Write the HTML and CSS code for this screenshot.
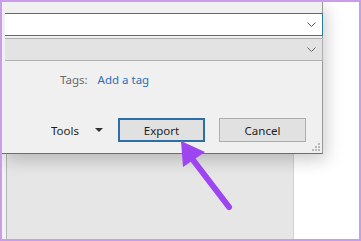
FILE: index.html
```html
<!DOCTYPE html>
<html lang="en">
<head>
    <meta charset="UTF-8">
    <meta name="viewport" content="width=device-width, initial-scale=1.0">
    <title>Export dialog</title>
    <link rel="stylesheet" href="styles.css">
</head>
<body>
    <div class="frame">
        <div class="backdrop">
            <div class="side-strip"></div>
            <div class="panel"></div>
            <div class="blank"></div>
        </div>

        <div class="dialog">
            <div class="combo combo-focus">
                <svg class="chevron" width="9" height="5" viewBox="0 0 9 5"><path d="M0.5 0.5 L4.5 4.5 L8.5 0.5" fill="none" stroke="#555" stroke-width="1"/></svg>
            </div>
            <div class="combo combo-disabled">
                <svg class="chevron" width="9" height="5" viewBox="0 0 9 5"><path d="M0.5 0.5 L4.5 4.5 L8.5 0.5" fill="none" stroke="#666" stroke-width="1"/></svg>
            </div>

            <div class="tags-row">
                <span class="tags-label">Tags:</span>
                <a class="tags-link" href="#">Add a tag</a>
            </div>

            <div class="button-row">
                <span class="tools">Tools</span>
                <span class="caret"></span>
                <button class="btn btn-default">Export</button>
                <button class="btn">Cancel</button>
            </div>

            <div class="grip">
                <span></span><span></span><span></span>
                <span></span><span></span><span></span>
            </div>
        </div>

        <!-- annotation arrow -->
        <svg class="arrow" width="361" height="241" viewBox="0 0 361 241">
            <line x1="190" y1="156" x2="229" y2="207" stroke="#9e45f2" stroke-width="6" stroke-linecap="round"/>
            <polygon points="181,141 183,167 205,152" fill="#9e45f2"/>
        </svg>
    </div>
</body>
</html>
```

FILE: styles.css
```css
body {
    margin: 0;
    padding: 0;
    font-family: 'Noto Sans', 'Liberation Sans', sans-serif;
    font-size: 11.5px;
    color: #1e1e1e;
}
.frame {
    width: 361px;
    height: 241px;
    box-sizing: border-box;
    border: 2px solid #c99cec;
    background-color: #ffffff;
    position: relative;
    overflow: hidden;
}
.backdrop {
    display: flex;
    height: 100%;
}
.side-strip {
    width: 4px;
    background-color: #f2f2f2;
    border-right: 1px solid #b4b4b4;
}
.panel {
    width: 286px;
    background-color: #e6e6e6;
    border-right: 1px solid #d2d2d2;
}
.blank {
    flex: 1;
    background-color: #ffffff;
}
.dialog {
    position: absolute;
    top: 0;
    left: 0;
    width: 320px;
    height: 140px;
    background-color: #f0f0f0;
    border-right: 1px solid #9a9a9a;
    border-bottom: 1px solid #6e6e6e;
    box-shadow: 3px 6px 16px rgba(0, 0, 0, 0.2);
    padding-top: 11px;
}
.combo {
    height: 21px;
    margin-left: 3px;
    width: 311px;
    display: flex;
    align-items: center;
    justify-content: flex-end;
    padding-right: 6px;
}
.combo-focus {
    background-color: #ffffff;
    border: 1px solid #2a7c9c;
    border-left: none;
}
.combo-disabled {
    margin-top: 2px;
    background-color: #e3e3e3;
    border: 1px solid #b0b0b0;
    border-left: none;
}
.chevron {
    display: block;
}
.tags-row {
    display: flex;
    align-items: center;
    margin-top: 9px;
    padding-left: 58px;
    height: 18px;
}
.tags-label {
    color: #6a6a6a;
    margin-right: 10px;
}
.tags-link {
    color: #2f6db8;
    text-decoration: none;
}
.button-row {
    display: flex;
    align-items: center;
    margin-top: 30px;
    padding-left: 49px;
    height: 24px;
}
.tools {
    color: #1e1e1e;
}
.caret {
    width: 0;
    height: 0;
    border-left: 4px solid transparent;
    border-right: 4px solid transparent;
    border-top: 4px solid #333;
    margin-left: 16px;
    margin-right: 15px;
}
.btn {
    font-family: inherit;
    font-size: 11.5px;
    color: #1e1e1e;
    background-color: #e1e1e1;
    border: 1px solid #adadad;
    width: 87px;
    height: 24px;
    padding: 0;
    margin: 0;
    box-sizing: border-box;
}
.btn-default {
    border: 2px solid #2b6ea8;
    margin-right: 14px;
}
.grip {
    position: absolute;
    right: 2px;
    bottom: 2px;
    width: 8px;
    height: 8px;
    display: grid;
    grid-template-columns: repeat(3, 2px);
    grid-template-rows: repeat(3, 2px);
    gap: 1px;
}
.grip span {
    background-color: #b9b9b9;
}
.grip span:nth-child(1) { grid-column: 3; grid-row: 1; }
.grip span:nth-child(2) { grid-column: 2; grid-row: 2; }
.grip span:nth-child(3) { grid-column: 3; grid-row: 2; }
.grip span:nth-child(4) { grid-column: 1; grid-row: 3; }
.grip span:nth-child(5) { grid-column: 2; grid-row: 3; }
.grip span:nth-child(6) { grid-column: 3; grid-row: 3; }
.arrow {
    position: absolute;
    top: -2px;
    left: -2px;
    pointer-events: none;
}
```
